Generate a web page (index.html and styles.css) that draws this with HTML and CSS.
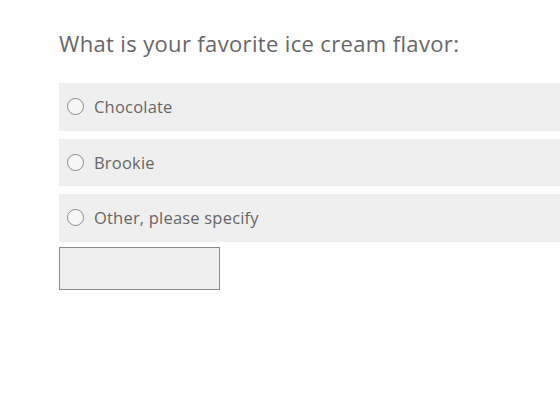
FILE: index.html
```html
<!DOCTYPE html>
<html lang="en">
<head>
<meta charset="UTF-8">
<title>Survey</title>
<link rel="stylesheet" href="styles.css">
</head>
<body>

<div class="question">
    <h2 class="question-title">What is your favorite ice cream flavor:</h2>

    <div class="choices">
        <label class="choice">
            <input type="radio" name="flavor" value="chocolate">
            <span class="radio-mark"></span>
            <span class="choice-text">Chocolate</span>
        </label>
        <label class="choice">
            <input type="radio" name="flavor" value="brookie">
            <span class="radio-mark"></span>
            <span class="choice-text">Brookie</span>
        </label>
        <label class="choice">
            <input type="radio" name="flavor" value="other">
            <span class="radio-mark"></span>
            <span class="choice-text">Other, please specify</span>
        </label>
    </div>

    <input class="other-input" type="text" aria-label="Other flavor">
</div>

</body>
</html>
```

FILE: styles.css
```css
body {
    margin: 0;
    background-color: #fefefe;
    font-family: "Open Sans", "Liberation Sans", sans-serif;
    color: #666666;
}

.question {
    padding: 27px 0 0 59px;
}

.question-title {
    margin: 0 0 24px 0;
    font-size: 22px;
    font-weight: 400;
    line-height: 32px;
    letter-spacing: 0.35px;
    color: #676767;
}

.choices {
    display: flex;
    flex-direction: column;
    gap: 8px;
}

.choice {
    display: flex;
    align-items: center;
    gap: 10px;
    height: 47.5px;
    padding-left: 8px;
    background-color: #efefef;
    cursor: pointer;
}

.choice input {
    display: none;
}

.radio-mark {
    width: 17px;
    height: 17px;
    border: 1px solid #8a8a8a;
    border-radius: 50%;
    box-sizing: border-box;
    background-color: #f7f7f7;
}

.choice-text {
    font-size: 16.5px;
    letter-spacing: 0.2px;
    color: #666666;
}

.other-input {
    display: block;
    margin-top: 5px;
    width: 161px;
    height: 43px;
    box-sizing: border-box;
    border: 1px solid #8c8c8c;
    background-color: #efefef;
    font-family: inherit;
    font-size: 16px;
}
```
